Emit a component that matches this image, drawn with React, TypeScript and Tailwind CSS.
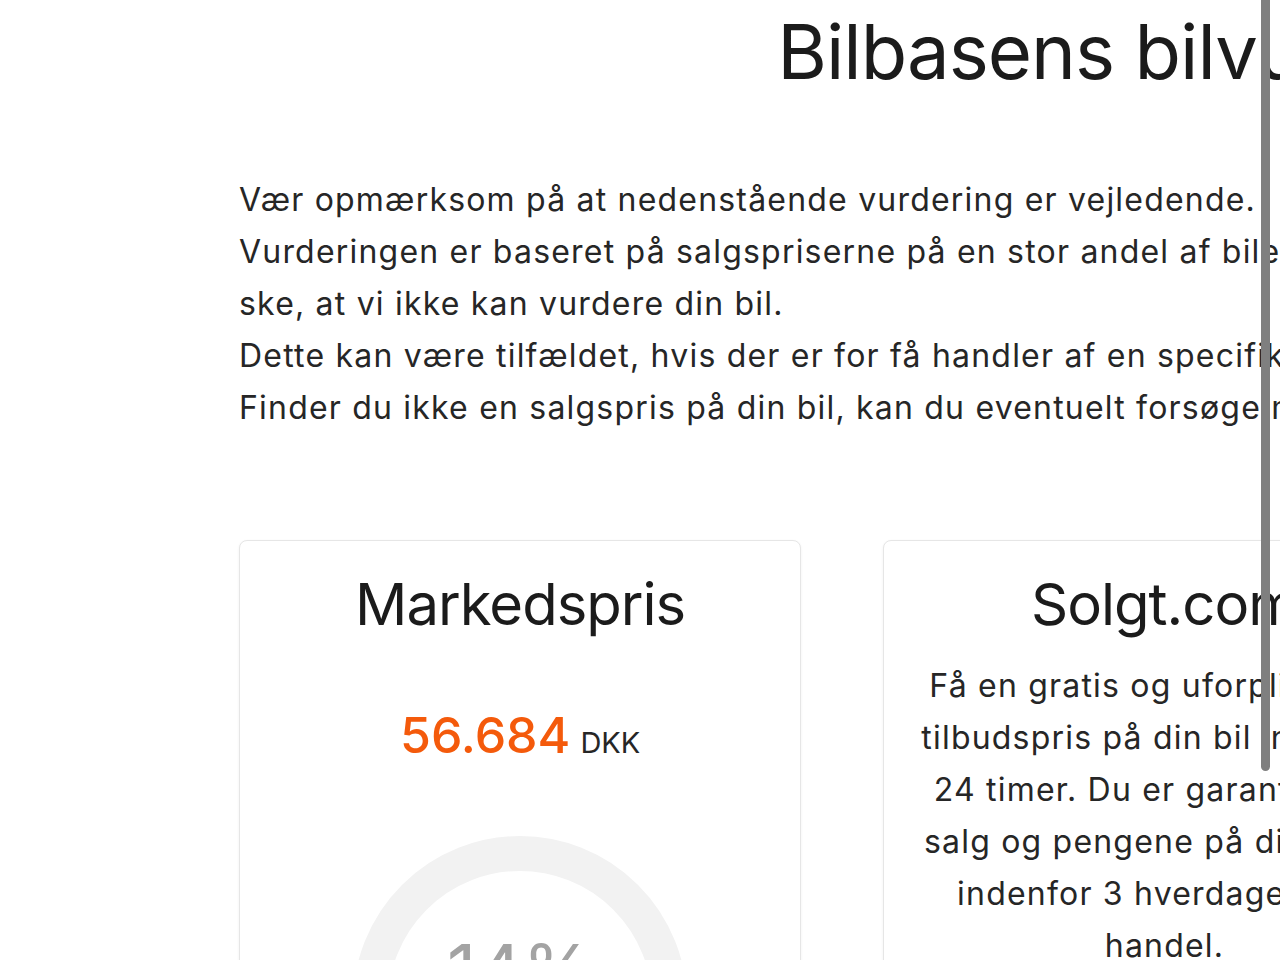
import React from 'react';

const bodyFont = { fontFamily: 'Inter, "Noto Sans", sans-serif' };

const introLines = [
  'Vær opmærksom på at nedenstående vurdering er vejledende.',
  'Vurderingen er baseret på salgspriserne på en stor andel af bilerne på markedet, men i enkelte tilfælde kan det',
  'ske, at vi ikke kan vurdere din bil.',
  'Dette kan være tilfældet, hvis der er for få handler af en specifik model, eller hvis bilen er meget gammel.',
  'Finder du ikke en salgspris på din bil, kan du eventuelt forsøge med en lignende model.',
];

const solgtLines = [
  'Få en gratis og uforpligtende',
  'tilbudspris på din bil inden for',
  '24 timer. Du er garanteret et',
  'salg og pengene på din konto',
  'indenfor 3 hverdage efter',
  'handel.',
];

const Card: React.FC<{ title: string; children: React.ReactNode }> = ({ title, children }) => (
  <div className="rounded-lg border border-[#e6e6e6] bg-white shadow-[0_1px_3px_rgba(0,0,0,0.06)] h-[520px] overflow-hidden">
    <h2 className="text-center text-[58px] leading-[70px] text-[#1b1b1b] pt-[28px] tracking-[-1px]">{title}</h2>
    {children}
  </div>
);

const App: React.FC = () => {
  return (
    <div className="relative w-[1280px] h-[960px] overflow-hidden bg-white" style={bodyFont}>
      <div className="ml-[239px] w-[1851px]">
        <h1 className="text-center text-[76px] leading-[90px] text-[#1b1b1b] pt-[6px] tracking-[-1px]">
          Bilbasens bilvurdering
        </h1>

        <div className="mt-[78px] text-[32px] leading-[52px] text-[#262626] tracking-[1.2px]">
          {introLines.map((line) => (
            <p key={line} className="whitespace-nowrap">{line}</p>
          ))}
        </div>

        <div className="mt-[106px] grid grid-cols-3 gap-[82px]">
          <Card title="Markedspris">
            <div className="mt-[59px] flex items-baseline justify-center gap-[10px]">
              <span className="text-[50px] font-medium text-[#f45a0b]">56.684</span>
              <span className="text-[29px] text-[#262626]">DKK</span>
            </div>
            <div className="mt-[63px] flex justify-center">
              <div className="relative w-[334px] h-[334px]">
                <svg width="334" height="334" viewBox="0 0 334 334">
                  <circle cx="167" cy="167" r="149.5" fill="none" stroke="#f2f2f2" strokeWidth="35" />
                  <circle
                    cx="167"
                    cy="167"
                    r="149.5"
                    fill="none"
                    stroke="#f45a0b"
                    strokeWidth="35"
                    strokeDasharray="131.5 939.3"
                    transform="rotate(90 167 167)"
                  />
                </svg>
                <div className="absolute inset-x-0 top-[98px] text-center text-[72px] leading-[72px] text-[#a3a3a3]">
                  14%
                </div>
              </div>
            </div>
          </Card>

          <Card title="Solgt.com">
            <div className="mt-[21px] text-center text-[32px] leading-[52px] text-[#262626] tracking-[1.2px]">
              {solgtLines.map((line) => (
                <p key={line}>{line}</p>
              ))}
            </div>
          </Card>

          <Card title="Forhandler">
            <div className="mt-[21px] text-center text-[32px] leading-[52px] text-[#262626] tracking-[1.2px] px-8">
              <p>Sælg din bil til en forhandler i nærheden af dig.</p>
            </div>
          </Card>
        </div>
      </div>

      {/* scrollbar overlay */}
      <div className="absolute top-0 left-[1261px] w-[9px] h-[771px] rounded-b-full bg-[#7f7f7f]" />
    </div>
  );
};

export default App;
